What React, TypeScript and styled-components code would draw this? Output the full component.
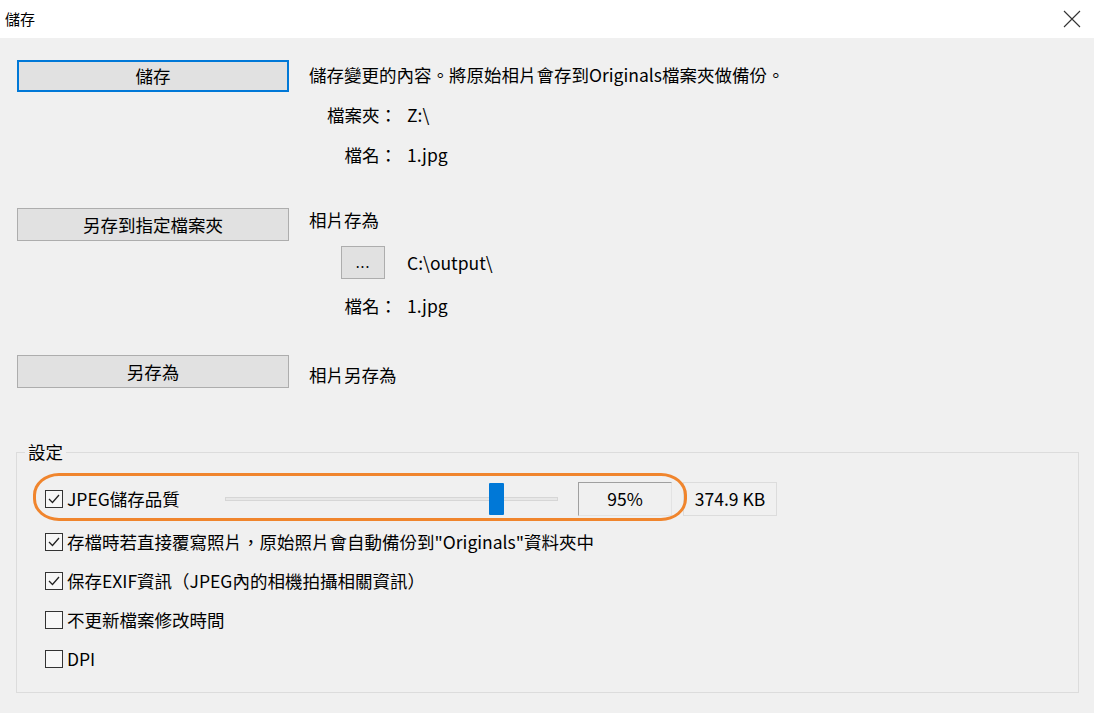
import React from "react";
import styled, { createGlobalStyle } from "styled-components";

const GlobalStyle = createGlobalStyle`
  html, body { margin: 0; padding: 0; background: #ffffff; }
  body { font-family: "Noto Sans CJK TC", "Noto Sans", sans-serif; color: #000; }
  * { box-sizing: border-box; }
  fieldset { min-width: 0; }
`;

const Window = styled.div`
  width: 1094px;
  height: 720px;
  display: flex;
  flex-direction: column;
  background: #ffffff;
`;

const TitleBar = styled.div`
  height: 38px;
  flex: none;
  display: flex;
  align-items: center;
  justify-content: space-between;
  padding: 0 13px 0 5px;
  font-size: 15px;
  background: #ffffff;
`;

const Title = styled.span`
  line-height: 20px;
`;

const CloseIcon = styled.svg`
  width: 18px;
  height: 18px;
  display: block;
`;

const Body = styled.div`
  height: 675px;
  flex: none;
  background: #f0f0f0;
  padding: 22px 15px 0 16px;
  display: flex;
  flex-direction: column;
  font-size: 17.5px;
`;

const Section = styled.div<{ $mt: number }>`
  display: grid;
  grid-template-columns: 272px 1fr;
  column-gap: 20px;
  align-items: start;
  margin-top: ${(p) => p.$mt}px;
  padding-left: 1px;
`;

const WideButton = styled.div<{ $primary?: boolean }>`
  width: 272px;
  height: ${(p) => (p.$primary ? 32 : 33)}px;
  display: flex;
  align-items: center;
  justify-content: center;
  background: #e1e1e1;
  border: ${(p) => (p.$primary ? "2px solid #0078d7" : "1px solid #adadad")};
  line-height: 20px;
`;

const RightColumn = styled.div<{ $gap: number; $pt: number }>`
  display: flex;
  flex-direction: column;
  gap: ${(p) => p.$gap}px;
  padding-top: ${(p) => p.$pt}px;
`;

const Line = styled.div`
  height: 24px;
  display: flex;
  align-items: center;
  white-space: nowrap;
  line-height: 20px;
`;

const InfoRow = styled.div<{ $h?: number; $mt?: number }>`
  display: grid;
  grid-template-columns: 88px auto;
  column-gap: 10px;
  align-items: center;
  height: ${(p) => p.$h ?? 24}px;
  margin-top: ${(p) => p.$mt ?? 0}px;
  line-height: 20px;
  white-space: nowrap;
`;

const InfoLabel = styled.span`
  text-align: right;
`;

const BrowseButton = styled.div`
  width: 44px;
  height: 33px;
  margin-left: 32px;
  display: flex;
  align-items: center;
  justify-content: center;
  background: #e1e1e1;
  border: 1px solid #adadad;
  font-size: 14px;
  letter-spacing: 1px;
  padding-bottom: 2px;
`;

const GroupBox = styled.fieldset`
  margin: 52px 0 0 0;
  padding: 0;
  border: 1px solid #dcdcdc;
  height: 253px;
`;

const GroupLegend = styled.legend`
  margin-left: 8px;
  padding: 0 3px;
  line-height: 24px;
`;

const GroupInner = styled.div`
  padding: 12px 0 9px 28px;
  display: flex;
  flex-direction: column;
`;

const OptionRow = styled.div<{ $h: number }>`
  position: relative;
  height: ${(p) => p.$h}px;
  display: flex;
  align-items: center;
  white-space: nowrap;
  line-height: 20px;
`;

const CheckLabel = styled.label<{ $w?: number }>`
  display: flex;
  align-items: center;
  gap: 4px;
  flex: none;
  ${(p) => (p.$w ? `width: ${p.$w}px;` : "")}
`;

const Box = styled.span`
  width: 18px;
  height: 18px;
  flex: none;
  border: 1px solid #333333;
  background: #f7f7f7;
  display: flex;
  align-items: center;
  justify-content: center;
`;

const SliderTrack = styled.div`
  position: relative;
  width: 333px;
  flex: none;
  height: 32px;
  display: flex;
  align-items: center;
`;

const TrackLine = styled.div`
  width: 100%;
  height: 4px;
  background: #e7e7e7;
  border: 1px solid #d6d6d6;
`;

const Thumb = styled.div`
  position: absolute;
  top: 0;
  width: 15px;
  height: 32px;
  background: #0078d7;
  border-radius: 1px;
`;

const ValueBox = styled.div<{ $sunken?: boolean; $ml: number }>`
  width: 94px;
  flex: none;
  margin-left: ${(p) => p.$ml}px;
  height: 34px;
  display: flex;
  align-items: center;
  justify-content: center;
  background: #f0f0f0;
  border: 1px solid;
  border-color: ${(p) =>
    p.$sunken ? "#a0a0a0 #e3e3e3 #e3e3e3 #a0a0a0" : "#dcdcdc"};
  line-height: 20px;
`;

const Highlight = styled.div`
  position: absolute;
  left: -12px;
  top: -3px;
  width: 654px;
  height: 48px;
  border: 3px solid #f0852d;
  border-radius: 26px / 22px;
  pointer-events: none;
`;

const BottomStrip = styled.div`
  flex: 1;
  background: #ffffff;
`;

const Check: React.FC<{ checked: boolean }> = ({ checked }) => (
  <Box>
    {checked && (
      <svg width="14" height="14" viewBox="0 0 14 14">
        <polyline
          points="2,7 5.5,10.5 12,3"
          fill="none"
          stroke="#222"
          strokeWidth="1.3"
        />
      </svg>
    )}
  </Box>
);

const options = [
  { text: "存檔時若直接覆寫照片，原始照片會自動備份到\"Originals\"資料夾中", checked: true },
  { text: "保存EXIF資訊（JPEG內的相機拍攝相關資訊）", checked: true },
  { text: "不更新檔案修改時間", checked: false },
  { text: "DPI", checked: false },
];

const thumbPct = 79.3;

export default function App() {
  return (
    <>
      <GlobalStyle />
      <Window>
        <TitleBar>
          <Title>儲存</Title>
          <CloseIcon viewBox="0 0 18 18">
            <path d="M1 1 L17 17 M17 1 L1 17" stroke="#333" strokeWidth="1.1" fill="none" />
          </CloseIcon>
        </TitleBar>
        <Body>
          <Section $mt={0}>
            <WideButton $primary>儲存</WideButton>
            <RightColumn $gap={16} $pt={3}>
              <Line>儲存變更的內容。將原始相片會存到Originals檔案夾做備份。</Line>
              <InfoRow>
                <InfoLabel>檔案夾：</InfoLabel>
                <span>Z:\</span>
              </InfoRow>
              <InfoRow>
                <InfoLabel>檔名：</InfoLabel>
                <span>1.jpg</span>
              </InfoRow>
            </RightColumn>
          </Section>

          <Section $mt={41}>
            <WideButton>另存到指定檔案夾</WideButton>
            <RightColumn $gap={14} $pt={0}>
              <Line>相片存為</Line>
              <InfoRow $h={33}>
                <BrowseButton>...</BrowseButton>
                <span>C:\output\</span>
              </InfoRow>
              <InfoRow $mt={1}>
                <InfoLabel>檔名：</InfoLabel>
                <span>1.jpg</span>
              </InfoRow>
            </RightColumn>
          </Section>

          <Section $mt={37}>
            <WideButton>另存為</WideButton>
            <RightColumn $gap={0} $pt={8}>
              <Line>相片另存為</Line>
            </RightColumn>
          </Section>

          <GroupBox>
            <GroupLegend>設定</GroupLegend>
            <GroupInner>
              <OptionRow $h={46}>
                <CheckLabel $w={180}>
                  <Check checked />
                  JPEG儲存品質
                </CheckLabel>
                <SliderTrack>
                  <TrackLine />
                  <Thumb style={{ left: `${thumbPct}%` }} />
                </SliderTrack>
                <ValueBox $sunken $ml={20}>95%</ValueBox>
                <ValueBox $ml={11}>374.9 KB</ValueBox>
                <Highlight />
              </OptionRow>
              {options.map((o) => (
                <OptionRow $h={39} key={o.text}>
                  <CheckLabel>
                    <Check checked={o.checked} />
                    {o.text}
                  </CheckLabel>
                </OptionRow>
              ))}
            </GroupInner>
          </GroupBox>
        </Body>
        <BottomStrip />
      </Window>
    </>
  );
}
